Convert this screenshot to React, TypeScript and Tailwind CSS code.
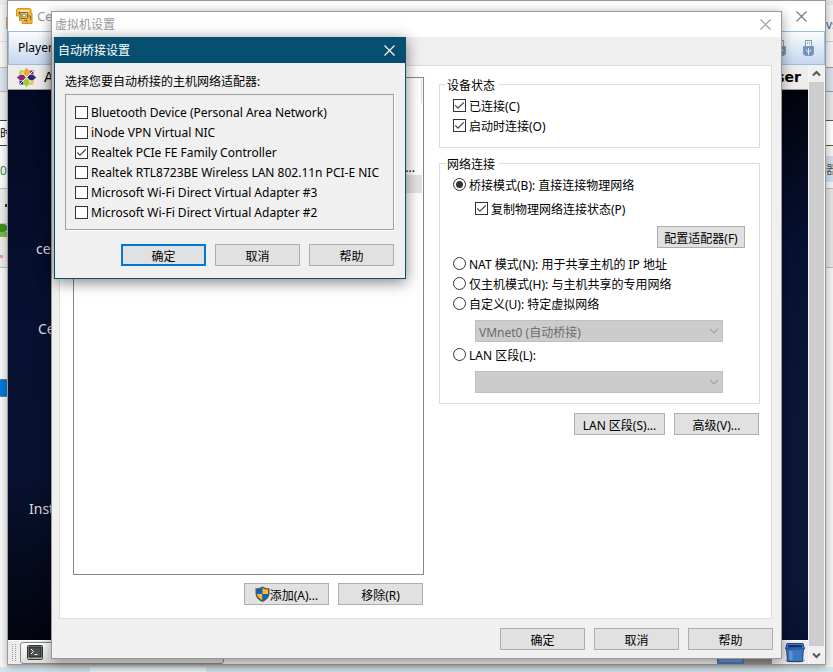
import { useId, useState } from "react";
import type { ReactNode } from "react";

const UI_FONT = "font-['Noto_Sans','Noto_Sans_CJK_SC',sans-serif]";

function CloseIcon({ className = "" }: { className?: string }) {
  return (
    <svg className={className} width="11" height="11" viewBox="0 0 11 11" fill="none" stroke="currentColor" strokeWidth="1.1">
      <path d="M0.5 0.5 10.5 10.5M10.5 0.5 0.5 10.5" />
    </svg>
  );
}

function Check({ label, checked = false, labelClass = "pt-[3px]" }: { label: string; checked?: boolean; labelClass?: string }) {
  const id = useId();
  const [on, setOn] = useState(checked);
  return (
    <div className="flex h-[19px] items-center gap-[3px]">
      <span className="grid">
        <input
          id={id}
          type="checkbox"
          checked={on}
          onChange={(e) => setOn(e.target.checked)}
          className="peer col-start-1 row-start-1 size-[13px] appearance-none border border-[#333] bg-white"
        />
        <svg
          className="pointer-events-none invisible col-start-1 row-start-1 peer-checked:visible"
          width="13"
          height="13"
          viewBox="0 0 13 13"
          fill="none"
          stroke="#444"
          strokeWidth="1.3"
        >
          <path d="M2.2 6.4 5 9.2 10.8 3.4" />
        </svg>
      </span>
      <label htmlFor={id} className={`whitespace-nowrap leading-[18px] ${labelClass}`}>
        {label}
      </label>
    </div>
  );
}

function Radio({ label, value, current, onPick }: { label: string; value: string; current: string; onPick: (v: string) => void }) {
  const id = useId();
  return (
    <div className="flex h-[19px] items-center gap-[3px]">
      <span className="grid place-items-center">
        <input
          id={id}
          type="radio"
          name="network-mode"
          checked={current === value}
          onChange={() => onPick(value)}
          className="peer col-start-1 row-start-1 size-[13px] appearance-none rounded-full border border-[#333] bg-white"
        />
        <span className="pointer-events-none invisible col-start-1 row-start-1 size-[7px] rounded-full bg-[#333] peer-checked:visible" />
      </span>
      <label htmlFor={id} className="whitespace-nowrap pt-[3px] leading-[18px]">
        {label}
      </label>
    </div>
  );
}

function Button({ children, primary = false, width = "w-[85px]" }: { children: ReactNode; primary?: boolean; width?: string }) {
  return (
    <button
      type="button"
      className={`${width} ${primary ? "border-2 border-[#0078d7]" : "border border-[#adadad]"} flex h-[22px] items-center justify-center whitespace-nowrap bg-[#e1e1e1] leading-[18px]`}
    >
      <span className="flex items-center pt-[3px]">{children}</span>
    </button>
  );
}

function DisabledSelect({ label, text }: { label: string; text: string }) {
  return (
    <div className="ml-[22px] mt-[7px] grid w-[248px] items-center text-[#6d6d6d]">
      <select
        disabled
        aria-label={label}
        className="col-start-1 row-start-1 h-[22px] appearance-none border border-[#bfbfbf] bg-[#ccc] pl-[3px] pt-[3px] leading-[18px] opacity-100"
      >
        <option>{text}</option>
      </select>
      <svg
        className="pointer-events-none col-start-1 row-start-1 mr-1 justify-self-end"
        width="10"
        height="6"
        viewBox="0 0 10 6"
        fill="none"
        stroke="#a0a0a0"
        strokeWidth="1.2"
      >
        <path d="M1 0.8 5 4.8 9 0.8" />
      </svg>
    </div>
  );
}

function Group({ title, className, children }: { title: string; className: string; children: ReactNode }) {
  return (
    <fieldset className={`border border-[#dcdcdc] pl-[13px] pr-[14px] pt-[3px] ${className}`}>
      <legend className="-ml-[7px] h-[17px] pl-px pr-1 leading-5">{title}</legend>
      {children}
    </fieldset>
  );
}

function Shield() {
  return (
    <svg className="-mt-[3px]" width="15" height="16" viewBox="0 0 15 16">
      <path d="M7.5 0.3C5.8 1.800 3.600 2.400 0.500 2.300V7c0 4.200 3 7.200 7 8.900C11.500 14.200 14.500 11.200 14.500 7V2.300C11.400 2.400 9.200 1.800 7.500 0.300z" fill="#555" />
      <path d="M7.500 2C6 3 4.200 3.500 2 3.500V8h5.500z" fill="#0067c5" />
      <path d="M7.500 2c1.500 1 3.300 1.500 5.500 1.500V8H7.500z" fill="#fdb92b" />
      <path d="M2 8h5.500v6.200C4.500 12.800 2.300 10.800 2 8z" fill="#fdb92b" />
      <path d="M13 8H7.500v6.200C10.500 12.800 12.700 10.800 13 8z" fill="#0067c5" />
    </svg>
  );
}

function VmIcon() {
  return (
    <svg width="17" height="17" viewBox="0 0 17 17">
      <path d="M1.500 0.500h12q1.500 0 1.500 1.500v3h1v10.500H6V12.500H3.500V8H0.500V1.500z" fill="#f8b733" stroke="#d0922a" />
      <path d="M2 2h11v2H2z" fill="#ffe08f" />
      <path d="M5 4.500h6.500v6H5z" fill="#fbd582" stroke="#7d6a45" />
      <circle cx="8.200" cy="7.500" r="1.700" fill="#fff" stroke="#7d6a45" />
      <path d="M2 5h3M3.500 3v3.500M12 8h2.500v4M8 12.500h3v2" fill="none" stroke="#7d6a45" />
    </svg>
  );
}

function UsbIcon() {
  return (
    <svg width="11" height="17" viewBox="0 0 11 17">
      <rect x="2.500" y="0.500" width="6" height="6" fill="#e9eef5" stroke="#8b9cb3" />
      <path d="M4 3h1M6 3h1" stroke="#6d819c" />
      <path d="M0.500 6.500h10v7.500l-1.500 1.500h-7l-1.500-1.500z" fill="#7090bd" stroke="#7f99bf" />
      <path d="M5.500 8v7M3.500 9.500v1.500l2 1.500L7.500 11v-1.500" fill="none" stroke="#dfe8f4" />
    </svg>
  );
}

function CentosLogo() {
  return (
    <svg width="21" height="21" viewBox="0 0 21 21">
      <rect x="3.500" y="3.500" width="6.500" height="6.500" fill="#9ccd2a" />
      <rect x="11" y="3.500" width="6.500" height="6.500" fill="#932279" />
      <rect x="3.500" y="11" width="6.500" height="6.500" fill="#262577" />
      <rect x="11" y="11" width="6.500" height="6.500" fill="#efa724" />
      <path d="M10.500 0.500 13.500 4v4l-3 2-3-2V4z" fill="#efa724" stroke="#edeceb" strokeWidth="0.600" />
      <path d="M20.500 10.500 17 13.500h-4l-2-3 2-3h4z" fill="#262577" stroke="#edeceb" strokeWidth="0.600" />
      <path d="M0.500 10.500 4 7.500h4l2 3-2 3H4z" fill="#932279" stroke="#edeceb" strokeWidth="0.600" />
      <path d="M10.500 20.500 7.500 17v-4l3-2 3 2v4z" fill="#9ccd2a" stroke="#edeceb" strokeWidth="0.600" />
      <path d="M4 4l13 13M17 4 4 17" stroke="#edeceb" />
    </svg>
  );
}

function TerminalIcon() {
  return (
    <svg width="16" height="15" viewBox="0 0 16 15">
      <rect x="0.500" y="0.500" width="15" height="14" rx="1" fill="#b9bcb8" stroke="#2e3436" />
      <rect x="2" y="2" width="12" height="10" fill="#4b5154" stroke="#1d2123" />
      <path d="M4 4l2.500 2.500L4 9M7.500 9.500h3" fill="none" stroke="#fff" />
      <path d="M3 13.500h3" stroke="#73d216" />
    </svg>
  );
}

function TrashIcon() {
  return (
    <svg width="20" height="20" viewBox="0 0 20 20">
      <ellipse cx="10" cy="17.500" rx="10" ry="2" fill="#a9a69f" />
      <path d="M1.500 5h17l-1 13.500H2.500z" fill="#3a78c4" stroke="#1c478b" />
      <path d="M2 0.500h16l1.500 5.500H0.500z" fill="#3f7cc9" stroke="#1c478b" />
      <path d="M3.500 2h13l0.800 2.500H2.700z" fill="#16315f" />
      <path d="M4 8l0.500 9h3V8z" fill="#5f97d8" />
    </svg>
  );
}

/* Slices of the applications that show past both sides of the player window. */
function LeftBackdrop() {
  return (
    <div className="flex w-[7px] flex-col overflow-hidden bg-[#f8f8f8]">
      <div className="h-[5px] bg-[#ebebeb]" />
      <div className="flex h-9 items-center justify-end">
        <span className="h-3 w-px bg-[#d9a066]" />
      </div>
      <div className="h-[26px] border-t border-[#ddd]" />
      <div className="h-[25px] border-y border-[#b8bcc2] bg-[#dde5ef]" />
      <div className="h-7 bg-[#eee]" />
      <div className="h-[26px] border-y border-[#444] bg-white text-[12px] leading-[26px]">时</div>
      <div className="flex h-[42px] items-center bg-[#fbfbfb] pt-2 text-[12px]">
        <span className="text-[#3a8a4a]">02</span>
      </div>
      <div className="h-[35px] border-t border-[#bbb] bg-[#ebebe9] pt-[15px]">
        <div className="ml-[5px] h-[3px] bg-[#333]" />
      </div>
      <div className="h-[14px] bg-[#a9d3ee] pt-px">
        <div className="h-2 rounded-r-full bg-[#3f8f1e]" />
        <div className="h-[5px] bg-[#7bb648]" />
      </div>
      <div className="h-[31px] border-b border-[#bbb] bg-[#ebebe9] pt-[18px]">
        <div className="h-[3px] w-[3px] bg-[#e89a9a]" />
      </div>
      <div className="h-[111px] bg-[#f7f7f7]" />
      <div className="h-[18px] border-y border-dotted border-[#e08030] bg-[#0078d7]" />
      <div className="flex-1 bg-[#f7f7f7]" />
    </div>
  );
}

function RightBackdrop() {
  return (
    <div className="flex w-[7px] flex-col overflow-hidden bg-[#f3f3f3]">
      <div className="h-[5px] bg-[#e4e4e4]" />
      <div className="flex h-9 items-center pt-[3px] text-[12px] text-[#3d5f94]">vs</div>
      <div className="h-[26px] border-t border-[#ccc]" />
      <div className="h-[25px] border-y border-[#999] bg-[#d8e0eb]" />
      <div className="h-7 bg-[#e6e6e6]" />
      <div className="h-[26px] border-y border-[#555] bg-white" />
      <div className="h-[10px]" />
      <div className="h-[26px] bg-[#cfdcec] text-[12px] leading-[28px] text-[#555]">器</div>
      <div className="h-[6px]" />
      <div className="h-20 border-y border-[#bbb] bg-[#e3e3e1]" />
      <div className="flex-1" />
    </div>
  );
}

function PlayerWindow() {
  return (
    <section className="absolute bottom-[7px] left-[7px] right-[7px] top-0 flex flex-col border border-[#999] bg-white shadow-[0_2px_8px_rgba(0,0,0,0.3)]">
      <header className="flex h-[30px] shrink-0 items-center pl-2 pr-[18px] text-[13px] text-[#999]">
        <VmIcon />
        <span className="ml-1 flex-1 leading-[18px]">CentOS 64 - VMware Pla</span>
        <span className="mr-9 size-[10px] border border-[#888]" />
        <button type="button" aria-label="Close" className="text-[#777]">
          <CloseIcon />
        </button>
      </header>
      <nav className="flex h-[34px] shrink-0 items-center border border-[#9dbde0] bg-gradient-to-b from-[#fbfcfe] to-[#c3d7ee] pl-[9px] pr-[10px] text-[12px]">
        <button type="button" className="flex-1 text-left">
          Player
        </button>
        <span className="flex gap-[17px]">
          <UsbIcon />
          <UsbIcon />
        </span>
      </nav>
      <div className="flex min-h-0 flex-1">
        <div className="flex min-w-0 flex-1 flex-col overflow-hidden">
          <div className="flex h-[25px] shrink-0 items-center border-b border-[#9c9a96] bg-[#edeceb] pl-2 pr-[7px] font-['DejaVu_Sans',sans-serif] text-[14px]">
            <CentosLogo />
            <span className="ml-[7px] flex-1">Applications</span>
            <span className="font-bold">user</span>
          </div>
          <div className="flex min-h-0 flex-1 flex-col items-start bg-[linear-gradient(180deg,#02040c_0%,#071033_28%,#0b1638_60%,#0b1638_90%,#091130_100%)] text-[14px] leading-5 text-[#ddd]">
            <div className="flex h-full w-11 flex-col overflow-hidden whitespace-nowrap bg-[linear-gradient(180deg,#030a24_0%,#071030_40%,#081130_70%,#02040e_100%)]">
              <span className="ml-7 mt-[149px]">centos</span>
              <span className="ml-[30px] mt-[60px]">CentOS</span>
              <span className="ml-[21px] mt-[160px]">Install</span>
            </div>
          </div>
          <div className="flex h-6 shrink-0 items-center border-t border-white bg-[#edeceb] pr-[3px]">
            <span className="ml-1 h-[17px] w-1 border-x border-dotted border-[#999]" />
            <button
              type="button"
              aria-label="Terminal"
              className="ml-1 flex h-[22px] w-[204px] items-center rounded-[3px] border border-[#8a8884] bg-gradient-to-b from-white to-[#dddcda] pl-[6px]"
            >
              <TerminalIcon />
            </button>
            <span className="ml-auto flex h-[22px] w-[55px] bg-[#94908b]">
              <span className="w-[27px] border-2 border-[#4a78b5] bg-[#6d97cc]" />
            </span>
            <span className="ml-[13px]">
              <TrashIcon />
            </span>
          </div>
        </div>
        <div className="flex w-[17px] flex-col items-center border-x border-[#f4f4f4] bg-[#cdcdcd]">
          <span className="flex h-[17px] w-full items-center justify-center bg-[#f0f0f0]">
            <svg width="9" height="7" viewBox="0 0 9 7" fill="none" stroke="#555" strokeWidth="2">
              <path d="M1 5.500 4.500 2 8 5.500" />
            </svg>
          </span>
          <span className="flex-1" />
          <span className="flex h-[18px] w-full items-center justify-center bg-[#f0f0f0]">
            <svg width="9" height="7" viewBox="0 0 9 7" fill="none" stroke="#555" strokeWidth="2">
              <path d="M1 1.500 4.500 5 8 1.500" />
            </svg>
          </span>
        </div>
      </div>
    </section>
  );
}

function SettingsDialog() {
  const [mode, setMode] = useState("bridged");
  return (
    <section
      role="dialog"
      aria-label="虚拟机设置"
      className="absolute left-[51px] right-[51px] top-[11px] border border-[#999] bg-[#f0f0f0] shadow-[0_3px_12px_rgba(0,0,0,0.4)]"
    >
      <header className="flex h-[25px] items-center justify-between bg-white pl-[3px] pr-[10px] text-[#999]">
        <span className="leading-[18px]">虚拟机设置</span>
        <button type="button" aria-label="关闭">
          <CloseIcon />
        </button>
      </header>
      <div className="pb-2 pl-[7px] pr-2 pt-7">
        <div className="mr-px flex gap-[15px] border border-[#dcdcdc] bg-white pb-[13px] pl-[13px] pr-[11px] pt-[11px]">
          <div className="w-[351px]">
            <div className="h-[498px] border border-[#828790] p-px">
              <div className="h-6 border-r border-[#dcdcdc]" />
              <div className="mt-14 h-4 pr-[7px] text-right leading-[18px]">...</div>
              <div className="h-[18px] bg-[#e4e4e4]" />
            </div>
            <div className="mt-2 flex justify-end gap-[9px] pr-px">
              <Button>
                <Shield />
                添加(A)...
              </Button>
              <Button>移除(R)</Button>
            </div>
          </div>
          <div className="-mt-px flex-1">
            <Group title="设备状态" className="pb-3">
              <Check label="已连接(C)" checked />
              <div className="mt-px">
                <Check label="启动时连接(O)" checked />
              </div>
            </Group>
            <Group title="网络连接" className="mt-[7px] pb-[10px]">
              <Radio label="桥接模式(B): 直接连接物理网络" value="bridged" current={mode} onPick={setMode} />
              <div className="ml-[22px] mt-[5px]">
                <Check label="复制物理网络连接状态(P)" checked />
              </div>
              <div className="mb-[6px] mt-2 flex justify-end">
                <Button width="w-[88px]">配置适配器(F)</Button>
              </div>
              <div className="flex flex-col gap-px">
                <Radio label="NAT 模式(N): 用于共享主机的 IP 地址" value="nat" current={mode} onPick={setMode} />
                <Radio label="仅主机模式(H): 与主机共享的专用网络" value="host" current={mode} onPick={setMode} />
                <Radio label="自定义(U): 特定虚拟网络" value="custom" current={mode} onPick={setMode} />
              </div>
              <DisabledSelect label="虚拟网络" text="VMnet0 (自动桥接)" />
              <div className="mt-[3px]">
                <Radio label="LAN 区段(L):" value="lan" current={mode} onPick={setMode} />
              </div>
              <DisabledSelect label="LAN 区段" text="" />
            </Group>
            <div className="mt-[9px] flex justify-end gap-[9px] pr-px">
              <Button width="w-[91px]">LAN 区段(S)...</Button>
              <Button>高级(V)...</Button>
            </div>
          </div>
        </div>
        <div className="mt-[9px] flex justify-end gap-[9px]">
          <Button>确定</Button>
          <Button>取消</Button>
          <Button>帮助</Button>
        </div>
      </div>
    </section>
  );
}

const ADAPTERS = [
  { name: "Bluetooth Device (Personal Area Network)", on: false },
  { name: "iNode VPN Virtual NIC", on: false },
  { name: "Realtek PCIe FE Family Controller", on: true },
  { name: "Realtek RTL8723BE Wireless LAN 802.11n PCI-E NIC", on: false },
  { name: "Microsoft Wi-Fi Direct Virtual Adapter #3", on: false },
  { name: "Microsoft Wi-Fi Direct Virtual Adapter #2", on: false },
];

function BridgingDialog() {
  return (
    <section
      role="dialog"
      aria-label="自动桥接设置"
      className="absolute left-[54px] top-[37px] w-[352px] border border-[#074f70] bg-[#f0f0f0] shadow-[0_3px_14px_rgba(0,0,0,0.5)]"
    >
      <header className="flex h-[25px] items-center justify-between bg-[#074f70] pl-[3px] pr-[10px] text-white">
        <span className="leading-[18px]">自动桥接设置</span>
        <button type="button" aria-label="关闭">
          <CloseIcon />
        </button>
      </header>
      <div className="pb-3 pl-[10px] pr-[11px] pt-[10px]">
        <p className="leading-[18px]">选择您要自动桥接的主机网络适配器:</p>
        <div className="mt-[3px] flex flex-col gap-px border border-[#a0a0a0] px-[9px] pb-[7px] pt-2 shadow-[1px_1px_0_#fff]">
          {ADAPTERS.map((a) => (
            <Check key={a.name} label={a.name} checked={a.on} labelClass="pt-px" />
          ))}
        </div>
        <div className="mt-[14px] flex justify-end gap-[9px]">
          <Button primary>确定</Button>
          <Button>取消</Button>
          <Button>帮助</Button>
        </div>
      </div>
    </section>
  );
}

export default function App() {
  return (
    <main className={`relative h-screen overflow-hidden bg-[#d3e6ef] text-[12px] text-black ${UI_FONT}`}>
      <div className="flex h-full flex-col">
        <div className="flex min-h-0 flex-1 justify-between bg-[#ddd]">
          <LeftBackdrop />
          <RightBackdrop />
        </div>
        <div className="h-[5px] pl-[90px]">
          <div className="h-full w-[116px] bg-[#eaf6fa]" />
        </div>
      </div>
      <PlayerWindow />
      <SettingsDialog />
      <BridgingDialog />
    </main>
  );
}
